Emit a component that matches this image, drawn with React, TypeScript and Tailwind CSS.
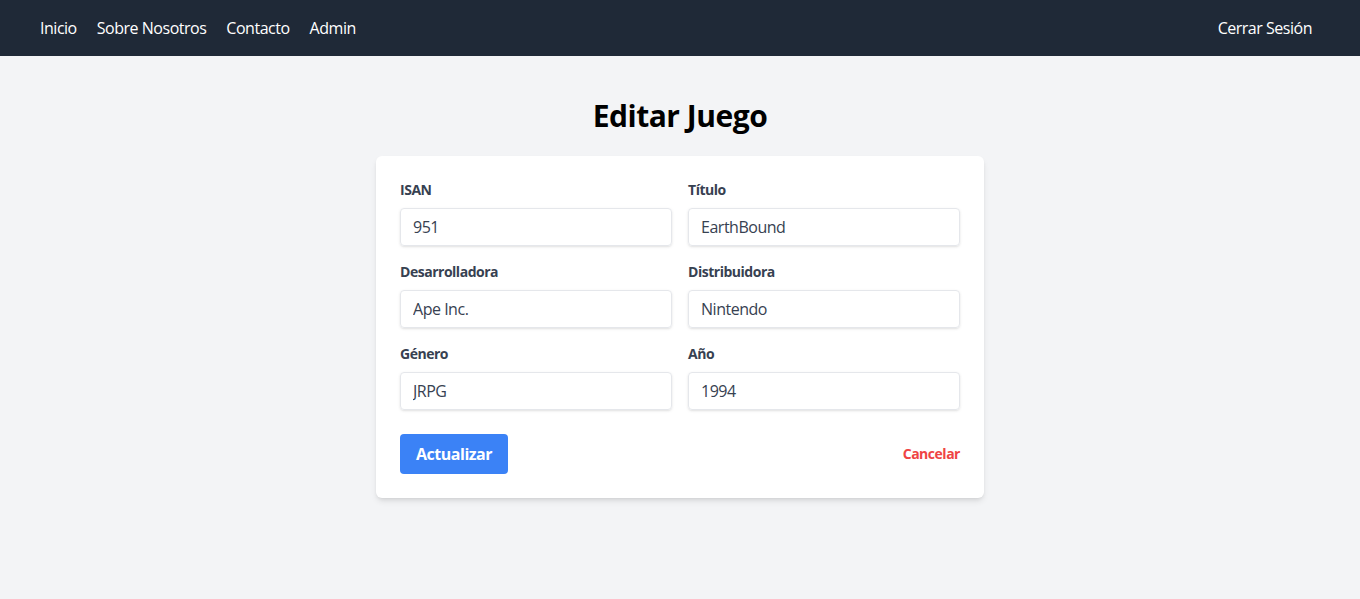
const fields = [
  { label: "ISAN", value: "951" },
  { label: "Título", value: "EarthBound" },
  { label: "Desarrolladora", value: "Ape Inc." },
  { label: "Distribuidora", value: "Nintendo" },
  { label: "Género", value: "JRPG" },
  { label: "Año", value: "1994" },
];

const Navbar = () => {
  return (
    <nav className="flex h-14 items-center justify-between bg-[#1f2937] pl-10 pr-12 text-white">
      <div className="flex gap-5">
        <a href="#">Inicio</a>
        <a href="#">Sobre Nosotros</a>
        <a href="#">Contacto</a>
        <a href="#">Admin</a>
      </div>
      <a href="#">Cerrar Sesión</a>
    </nav>
  );
};

const App = () => {
  return (
    <div
      className="min-h-[599px] bg-[#f3f4f6] tracking-[-0.03em]"
      style={{ fontFamily: '"Open Sans", "Noto Sans", sans-serif' }}
    >
      <Navbar />
      <main className="flex flex-col items-center pt-[42px]">
        <h1 className="mb-[22px] text-3xl font-bold text-black">Editar Juego</h1>
        <form className="w-[608px] rounded-md bg-white p-6 shadow-md">
          <div className="grid grid-cols-2 gap-x-4 gap-y-4">
            {fields.map((f) => (
              <div key={f.label}>
                <label className="mb-2 block text-sm font-bold text-[#374151]">
                  {f.label}
                </label>
                <input
                  defaultValue={f.value}
                  className="h-[38px] w-full rounded border border-[#e5e7eb] px-3 text-[#374151] shadow-sm outline-none"
                />
              </div>
            ))}
          </div>
          <div className="mt-6 flex items-center justify-between">
            <button
              type="button"
              className="h-10 rounded bg-[#3b82f6] px-4 font-bold text-white"
            >
              Actualizar
            </button>
            <a href="#" className="text-sm font-bold text-[#ef4444]">
              Cancelar
            </a>
          </div>
        </form>
      </main>
    </div>
  );
};

export default App;
